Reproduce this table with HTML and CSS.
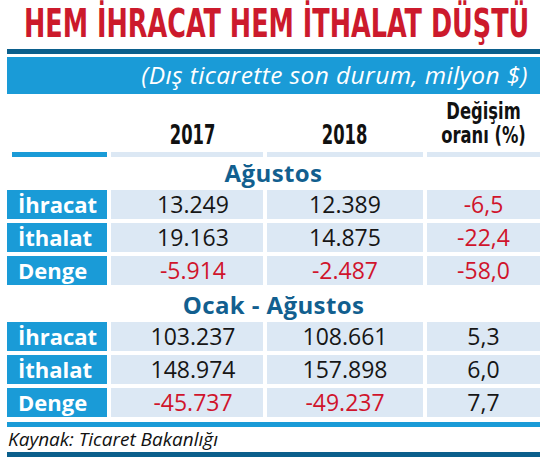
FILE: index.html
```html
<!DOCTYPE html>
<html lang="tr">
<head>
    <meta charset="UTF-8">
    <title>Hem ihracat hem ithalat düştü</title>
    <link rel="stylesheet" href="styles.css">
</head>
<body>
    <div class="graphic">
        <h1 class="title"><span class="narrow">HEM İHRACAT HEM İTHALAT DÜŞTÜ</span></h1>
        <div class="rule-dark"></div>
        <div class="subtitle">(Dış ticarette son durum, milyon $)</div>

        <div class="table">
            <div class="head"></div>
            <div class="head first"><span class="narrow">2017</span></div>
            <div class="head"><span class="narrow">2018</span></div>
            <div class="head change"><span class="narrow">Değişim<br>oranı (%)</span></div>

            <div class="bar bar-label"></div>
            <div class="bar"></div>
            <div class="bar"></div>
            <div class="bar"></div>

            <div class="section">Ağustos</div>
            <div class="label">İhracat</div>
            <div class="cell first">13.249</div>
            <div class="cell">12.389</div>
            <div class="cell neg">-6,5</div>

            <div class="label">İthalat</div>
            <div class="cell first">19.163</div>
            <div class="cell">14.875</div>
            <div class="cell neg">-22,4</div>

            <div class="label">Denge</div>
            <div class="cell first neg">-5.914</div>
            <div class="cell neg">-2.487</div>
            <div class="cell neg">-58,0</div>

            <div class="section">Ocak - Ağustos</div>
            <div class="label">İhracat</div>
            <div class="cell first">103.237</div>
            <div class="cell">108.661</div>
            <div class="cell">5,3</div>

            <div class="label">İthalat</div>
            <div class="cell first">148.974</div>
            <div class="cell">157.898</div>
            <div class="cell">6,0</div>

            <div class="label">Denge</div>
            <div class="cell first neg">-45.737</div>
            <div class="cell neg">-49.237</div>
            <div class="cell">7,7</div>
        </div>

        <div class="rule-blue"></div>
        <div class="source">Kaynak: Ticaret Bakanlığı</div>
        <div class="rule-dark"></div>
    </div>
</body>
</html>
```

FILE: styles.css
```css
body {
    margin: 0;
    background: #fff;
    font-family: "Open Sans", "DejaVu Sans", sans-serif;
}

.graphic {
    width: 533px;
    padding-left: 7px;
}

/* dar yazi: kondanse font yok, yatayda sikistiriyoruz */
.narrow {
    display: inline-block;
    transform: scaleX(0.7);
}

/* baslik */
.title {
    margin: 0;
    height: 49px;
    padding-left: 17px;
    overflow: hidden;
    font-family: "DejaVu Sans Condensed", "DejaVu Sans", sans-serif;
    font-weight: bold;
    font-size: 39px;
    line-height: 47px;
    color: #cc1a2c;
    white-space: nowrap;
}
.title .narrow {
    transform: scaleX(0.727);
    transform-origin: left center;
}

.rule-dark {
    height: 5px;
    background: #0b5f8c;
}

.subtitle {
    margin-top: 3px;
    height: 37px;
    padding-right: 12px;
    background: #1a9bd7;
    color: #fff;
    font-style: italic;
    font-size: 24.5px;
    letter-spacing: 0.4px;
    line-height: 36px;
    text-align: right;
}

/* tablo */
.table {
    display: grid;
    grid-template-columns: 100px 152px 156px 113px;
    column-gap: 4px;
}

.head {
    height: 58px;
    display: flex;
    align-items: flex-end;
    justify-content: center;
    padding-bottom: 5px;
    box-sizing: border-box;
    font-family: "DejaVu Sans Condensed", "DejaVu Sans", sans-serif;
    font-weight: bold;
    font-size: 26px;
    line-height: 23px;
    color: #111;
    text-align: center;
}
.head.change {
    font-size: 23px;
    line-height: 24px;
}
.head.change .narrow {
    transform: scaleX(0.79);
}

.bar {
    height: 5px;
    background: #dce8f4;
}
.bar-label {
    margin-left: 5px;
    background: #1a9bd7;
}

.section {
    grid-column: 1 / 5;
    height: 33px;
    text-align: center;
    font-weight: bold;
    font-size: 24px;
    letter-spacing: 0.4px;
    line-height: 31px;
    color: #125f8f;
}

.label,
.cell {
    height: 29px;
    margin-bottom: 4px;
    line-height: 28px;
}

.label {
    padding-left: 11px;
    background: #1a9bd7;
    color: #fff;
    font-weight: bold;
    font-size: 22px;
}

.cell {
    background: #dce8f4;
    color: #161616;
    font-size: 23px;
    text-align: center;
}
.first {
    padding-left: 12px;
}
.neg {
    color: #d0142c;
}

.rule-blue {
    margin-top: 1px;
    height: 5px;
    background: #1a9bd7;
}

.source {
    height: 25px;
    padding-left: 1px;
    font-style: italic;
    font-size: 19px;
    line-height: 25px;
    color: #111;
}
```
